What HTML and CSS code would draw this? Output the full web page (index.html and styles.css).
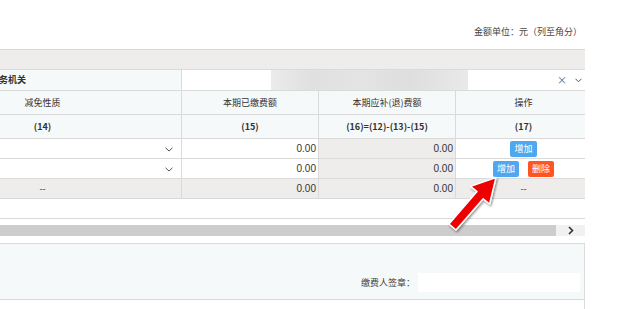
FILE: index.html
```html
<!DOCTYPE html>
<html>
<head>
<meta charset="utf-8">
<link rel="stylesheet" href="styles.css">
</head>
<body>
<div class="page">
  <div class="unit">金额单位：元（列至角分）</div>
  <div class="sheet">
    <table class="grid">
      <colgroup>
        <col class="c1"><col class="c2"><col class="c3"><col class="c4">
      </colgroup>
      <tr class="band"><td colspan="4"></td></tr>
      <tr class="org">
        <td class="org-label"><span>主管税务机关</span></td>
        <td colspan="3" class="org-field">
          <div class="field-row">
            <div class="masked"></div>
            <span class="clear">×</span>
            <svg class="caret" width="7" height="5" viewBox="0 0 7 5"><polyline points="0.5,0.8 3.5,3.8 6.5,0.8" fill="none" stroke="#555" stroke-width="1"/></svg>
          </div>
        </td>
      </tr>
      <tr class="head">
        <th>减免性质</th>
        <th>本期已缴费额</th>
        <th>本期应补(退)费额</th>
        <th class="ops">操作</th>
      </tr>
      <tr class="head idx">
        <th>(14)</th>
        <th>(15)</th>
        <th>(16)=(12)-(13)-(15)</th>
        <th class="ops">(17)</th>
      </tr>
      <tr class="row">
        <td class="sel"><svg width="8" height="5" viewBox="0 0 8 5"><polyline points="0.5,0.8 4,4 7.5,0.8" fill="none" stroke="#555" stroke-width="1"/></svg></td>
        <td class="num">0.00</td>
        <td class="num calc">0.00</td>
        <td class="ops"><button class="btn add">增加</button></td>
      </tr>
      <tr class="row">
        <td class="sel"><svg width="8" height="5" viewBox="0 0 8 5"><polyline points="0.5,0.8 4,4 7.5,0.8" fill="none" stroke="#555" stroke-width="1"/></svg></td>
        <td class="num">0.00</td>
        <td class="num calc">0.00</td>
        <td class="ops"><button class="btn add">增加</button><button class="btn del">删除</button></td>
      </tr>
      <tr class="row total">
        <td class="dash">--</td>
        <td class="num">0.00</td>
        <td class="num">0.00</td>
        <td class="ops dash">--</td>
      </tr>
      <tr class="blank"><td colspan="4"></td></tr>
    </table>
    <div class="scroll">
      <div class="thumb"></div>
      <div class="step">
        <svg width="6" height="9" viewBox="0 0 6 9"><polyline points="1,1 4.5,4.5 1,8" fill="none" stroke="#333" stroke-width="1.6"/></svg>
      </div>
    </div>
    <div class="sign">
      <span class="sign-label">缴费人签章：</span>
      <div class="sign-input"></div>
    </div>
    <div class="after"></div>
  </div>
  <svg class="pointer" width="620" height="309" viewBox="0 0 620 309">
    <defs>
      <filter id="sh" x="-20%" y="-20%" width="140%" height="140%">
        <feDropShadow dx="1" dy="1.5" stdDeviation="1.2" flood-color="#000" flood-opacity="0.45"/>
      </filter>
    </defs>
    <polygon filter="url(#sh)" points="456,230 483.2,198.8 489.6,204 496,177.5 470.6,186.4 477,191.6 449,224" fill="#ee0000" stroke="#fff" stroke-width="1.5" stroke-linejoin="round"/>
  </svg>
</div>
</body>
</html>
```

FILE: styles.css
```css
body {
  margin: 0;
  background: #fff;
  font-family: "Noto Sans CJK SC", "Noto Sans", sans-serif;
  font-size: 9px;
  color: #333;
}

.page {
  position: relative;
  width: 620px;
  height: 309px;
  overflow: hidden;
}

.unit {
  width: 585px;
  box-sizing: border-box;
  height: 49px;
  padding: 25px 3px 0 0;
  line-height: 14px;
  text-align: right;
  color: #444;
}

.sheet {
  width: 585px;
  overflow: hidden;
}

.grid {
  margin-left: -97px;
  width: 688px;
  border-collapse: collapse;
  table-layout: fixed;
}
.grid .c1 { width: 278px; }
.grid .c2 { width: 137px; }
.grid .c3 { width: 137px; }
.grid .c4 { width: 136px; }

.grid td, .grid th {
  border: 1px solid #dadada;
  padding: 0;
  line-height: 12px;
}

.band td {
  height: 19px;
  background: #efecec;
  border-left: 0;
  border-right: 0;
}

.org td { height: 20px; }
.org-label {
  background: #f6f9fa;
  font-weight: bold;
}
.org-label span { padding-left: 68px; }
.org-field { background: #fff; }
.field-row {
  display: flex;
  align-items: center;
  height: 20px;
}
.masked {
  margin-left: 89px;
  width: 197px;
  height: 20px;
  background: linear-gradient(to right, #ebebeb 0%, #e0e0e0 20%, #e4e4e4 45%, #dedede 70%, #e9e9e9 100%);
  filter: blur(0.6px);
}
.clear {
  margin-left: auto;
  font-size: 10px;
  color: #666;
}
.caret {
  margin: 0 9px 0 8px;
}

.head th {
  height: 23px;
  background: #f6f9fa;
  font-weight: normal;
  text-align: center;
}
.head.idx th { font-weight: bold; }

.row td {
  height: 19px;
  background: #fff;
}
.row .sel {
  text-align: right;
  padding-right: 8px;
}
.row .sel svg { vertical-align: middle; }
.row .num {
  text-align: right;
  padding-right: 2px;
  font-family: "Liberation Sans", sans-serif;
  font-size: 10px;
}
.row .calc { background: #efecec; }
.row .ops { text-align: center; }
.row.total td { background: #efecec; }
.row .dash { text-align: center; }

.btn {
  height: 16px;
  padding: 0 4px;
  border: 0;
  border-radius: 2px;
  color: #fff;
  font: inherit;
  line-height: 16px;
  vertical-align: middle;
}
.btn.add { background: #4fa8ef; }
.btn.del {
  background: #ff5522;
  margin-left: 9px;
}

.blank td {
  height: 19px;
  border-left: 0;
  border-right: 0;
}

.scroll {
  display: flex;
  height: 11px;
  margin-top: 6px;
}
.thumb {
  flex: 1;
  background: #cdcdcd;
}
.step {
  width: 29px;
  background: #f1f1f1;
  display: flex;
  align-items: center;
  justify-content: center;
}

.sign {
  margin-top: 7px;
  height: 57px;
  box-sizing: border-box;
  background: #f6f9fa;
  border: 1px solid #dadada;
  border-left: 0;
  display: flex;
  align-items: flex-end;
  justify-content: flex-end;
  padding: 0 4px 7px 0;
}
.sign-label {
  line-height: 19px;
  margin-right: 3px;
  color: #444;
}
.sign-input {
  width: 162px;
  height: 19px;
  background: #fff;
}

.after {
  height: 10px;
  border-right: 1px solid #dadada;
}

.pointer {
  position: absolute;
  left: 0;
  top: 0;
}
```
